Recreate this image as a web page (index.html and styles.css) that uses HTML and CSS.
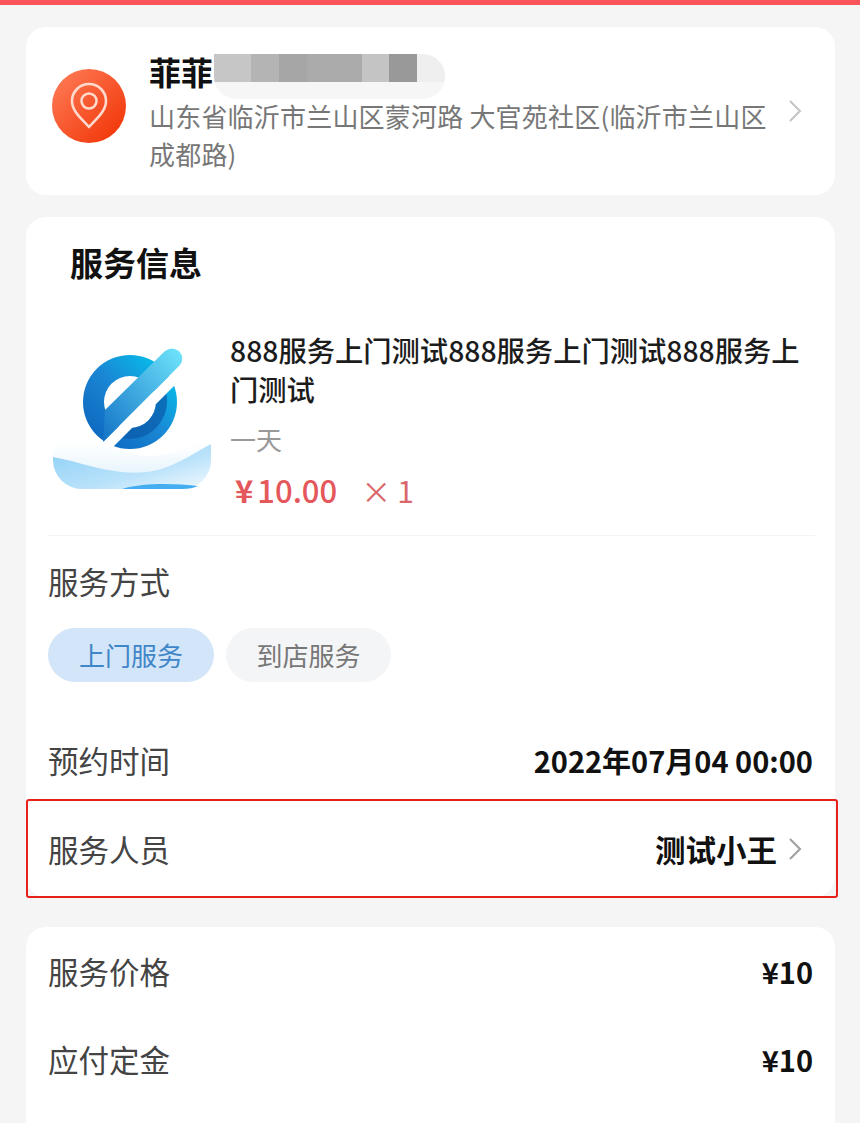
FILE: index.html
```html
<!DOCTYPE html>
<html lang="zh-CN">
<head>
    <meta charset="UTF-8">
    <title>服务信息</title>
    <link rel="stylesheet" href="styles.css">
</head>
<body>
    <div class="top-bar"></div>

    <!-- address -->
    <div class="card address-card">
        <svg class="pin" viewBox="0 0 74 76">
            <defs>
                <linearGradient id="pinBg" x1="0" y1="0" x2="1" y2="1">
                    <stop offset="0" stop-color="#ff7f5c"/>
                    <stop offset="1" stop-color="#f03000"/>
                </linearGradient>
            </defs>
            <circle cx="37" cy="38" r="37" fill="url(#pinBg)"/>
            <path d="M37 59 C31 52 20 44 20 33 A17 17 0 0 1 54 33 C54 44 43 52 37 59 Z" fill="none" stroke="#ffd9cc" stroke-width="2.6" stroke-linejoin="round"/>
            <circle cx="37" cy="33" r="7.5" fill="none" stroke="#ffd9cc" stroke-width="2.6"/>
        </svg>
        <div class="address-text">
            <div class="name">菲菲</div>
            <div class="address">山东省临沂市兰山区蒙河路 大官苑社区(临沂市兰山区成都路)</div>
            <div class="mosaic">
                <span></span><span></span><span></span><span></span><span></span><span></span>
            </div>
        </div>
        <svg class="chevron chevron-light" viewBox="0 0 14 22"><path d="M2 1 L12 11 L2 21" fill="none" stroke="#c4c4c4" stroke-width="2"/></svg>
    </div>

    <!-- service -->
    <div class="card service-card">
        <h2 class="section-title">服务信息</h2>
        <div class="product">
            <svg class="logo" viewBox="0 0 160 150">
                <defs>
                    <linearGradient id="ringFill" x1="0" y1="1" x2="1" y2="0">
                        <stop offset="0" stop-color="#0a5fb8"/>
                        <stop offset="0.5" stop-color="#1a86d4"/>
                        <stop offset="1" stop-color="#00d0f2"/>
                    </linearGradient>
                    <linearGradient id="barFill" x1="0" y1="1" x2="1" y2="0">
                        <stop offset="0" stop-color="#1272c6"/>
                        <stop offset="1" stop-color="#70e6fc"/>
                    </linearGradient>
                    <linearGradient id="waveBack" x1="0" y1="0" x2="0" y2="1">
                        <stop offset="0" stop-color="#ffffff" stop-opacity="0"/>
                        <stop offset="0.4" stop-color="#f4fafe"/>
                        <stop offset="1" stop-color="#dcf0fc"/>
                    </linearGradient>
                    <linearGradient id="waveFront" x1="0" y1="0" x2="1" y2="1">
                        <stop offset="0" stop-color="#8ccff7"/>
                        <stop offset="0.6" stop-color="#b9e2fa"/>
                        <stop offset="1" stop-color="#f2f9fe"/>
                    </linearGradient>
                </defs>
                <path d="M31 60 A47 47 0 1 1 125 60 A47 47 0 1 1 31 60 Z M52 60 A26 26 0 1 0 104 60 A26 26 0 1 0 52 60 Z" fill="url(#ringFill)" fill-rule="evenodd"/>
                <path d="M78 86 A26 26 0 0 0 104 60 L104 50 L114 50 A38 38 0 0 1 78 97 L66 96 L72 86 Z" fill="#0a5aa8" opacity="0.7"/>
                <path d="M40 111 L130 21 L145 21 L55 111 Z" fill="#fff"/>
                <path d="M53 68 L113 9 Q120 4 127 9 Q133 16 128 23 L51 100 Z" fill="url(#barFill)"/>
                <path d="M1 94 C30 98 60 104 80 112 C110 118 135 108 159 94 V118 A29 29 0 0 1 130 147 H30 A29 29 0 0 1 1 118 Z" fill="url(#waveBack)"/>
                <path d="M1 115 C30 120 60 134 95 130 C120 127 140 112 159 102 V118 A29 29 0 0 1 130 147 H30 A29 29 0 0 1 1 118 Z" fill="url(#waveFront)"/>
                <path d="M70 147 C95 140 125 142 146 144 Q140 147 130 147 Z" fill="#44aef0"/>
            </svg>
            <div class="product-info">
                <div class="product-name">888服务上门测试888服务上门测试888服务上门测试</div>
                <div class="product-spec">一天</div>
                <div class="product-price"><span class="price"><span class="yen">¥</span>10.00</span><span class="qty">×</span><span class="count">1</span></div>
            </div>
        </div>
        <div class="divider"></div>
        <div class="method">
            <div class="row-label">服务方式</div>
            <div class="pills">
                <span class="pill pill-on">上门服务</span>
                <span class="pill">到店服务</span>
            </div>
        </div>
        <div class="row time-row">
            <span class="row-label">预约时间</span>
            <span class="row-value">2022年07月04 00:00</span>
        </div>
        <div class="row staff-row">
            <span class="row-label">服务人员</span>
            <span class="row-value">测试小王</span>
            <svg class="chevron" viewBox="0 0 14 22"><path d="M2 1 L12 11 L2 21" fill="none" stroke="#a3a3a3" stroke-width="2.2"/></svg>
        </div>
    </div>

    <!-- price -->
    <div class="card price-card">
        <div class="row price-row">
            <span class="row-label">服务价格</span>
            <span class="row-value">¥10</span>
        </div>
        <div class="row price-row">
            <span class="row-label">应付定金</span>
            <span class="row-value">¥10</span>
        </div>
    </div>
</body>
</html>
```

FILE: styles.css
```css
html, body {
    height: 1123px;
    overflow: hidden;
}

body {
    margin: 0;
    background-color: #f5f5f5;
    color: #1a1a1a;
    font-family: "Noto Sans CJK SC", "Noto Sans", sans-serif;
}

.top-bar {
    height: 5px;
    background-color: #f9545a;
}

.card {
    margin: 0 25px 0 26px;
    background-color: #fff;
    border-radius: 20px;
}

/* address */
.address-card {
    position: relative;
    display: flex;
    align-items: center;
    margin-top: 22px;
    height: 168px;
    padding: 0 32px 0 26px;
    box-sizing: border-box;
}

.pin {
    flex: none;
    width: 74px;
    height: 76px;
    margin-top: -11px;
}

.address-text {
    position: relative;
    width: 622px;
    margin-left: 23px;
    margin-top: 1px;
}

.name {
    font-size: 32px;
    line-height: 40px;
    font-weight: bold;
    color: #111;
}

.address {
    margin-top: 6px;
    font-size: 26px;
    line-height: 38px;
    letter-spacing: 0.2px;
    color: #777;
}

.mosaic {
    position: absolute;
    left: 65px;
    top: 3px;
    display: flex;
    width: 231px;
    height: 45px;
    border-radius: 0 22px 22px 22px;
    background: linear-gradient(#efefef 62%, #f6f6f6 62%);
    overflow: hidden;
}

.mosaic span {
    height: 28px;
}

.mosaic span:nth-child(1) { width: 37px; background-color: #c6c6c6; }
.mosaic span:nth-child(2) { width: 28px; background-color: #b4b4b4; }
.mosaic span:nth-child(3) { width: 28px; background-color: #a6a6a6; }
.mosaic span:nth-child(4) { width: 55px; background-color: #ababab; }
.mosaic span:nth-child(5) { width: 27px; background-color: #c4c4c4; }
.mosaic span:nth-child(6) { width: 28px; background-color: #999; }

.chevron {
    flex: none;
    width: 14px;
    height: 22px;
}

.chevron-light {
    margin-left: 17px;
}

/* service */
.service-card {
    margin-top: 22px;
    height: 680px;
}

.section-title {
    margin: 0;
    padding: 22px 0 0 44px;
    font-size: 33px;
    line-height: 46px;
    font-weight: bold;
    color: #111;
}

.product {
    display: flex;
    margin-top: 44px;
    padding-left: 26px;
}

.logo {
    flex: none;
    width: 160px;
    height: 150px;
    margin-top: 13px;
}

.product-info {
    width: 578px;
    margin-left: 18px;
    margin-top: 1px;
}

.product-name {
    font-size: 28.3px;
    line-height: 39px;
    font-weight: 500;
    color: #1c1c1c;
}

.product-spec {
    margin-top: 13px;
    font-size: 26px;
    line-height: 36px;
    color: #999;
}

.product-price {
    margin-top: 12px;
    line-height: 42px;
    color: #e4575a;
}

.price {
    margin-left: 5px;
    font-size: 31px;
    font-weight: 500;
}

.yen {
    margin-right: 4px;
    font-weight: bold;
}

.qty {
    margin-left: 24px;
    font-size: 30px;
    color: #d9686a;
}

.count {
    margin-left: 6px;
    font-size: 30px;
    color: #d9686a;
}

.divider {
    height: 1px;
    margin: 18px 20px 0 22px;
    background-color: #f3f3f3;
}

.method {
    padding: 22px 22px 0;
}

.row-label {
    font-size: 30.5px;
    line-height: 46px;
    color: #444;
}

.pills {
    display: flex;
    gap: 12px;
    margin-top: 24px;
}

.pill {
    width: 165px;
    height: 54px;
    border-radius: 27px;
    background-color: #f4f5f6;
    color: #777;
    font-size: 26px;
    line-height: 54px;
    text-align: center;
}

.pill-on {
    width: 166px;
    background-color: #d3e5f8;
    color: #3f86c8;
}

.row {
    display: flex;
    align-items: center;
    justify-content: space-between;
    padding: 0 22px;
}

.row-value {
    font-size: 29px;
    line-height: 46px;
    font-weight: bold;
    color: #111;
}

.time-row {
    margin-top: 55px;
    height: 46px;
}

.staff-row {
    box-sizing: border-box;
    height: 99px;
    margin: 16px -3px 0 0;
    padding-right: 34px;
    border: 2px solid #e8201a;
    border-radius: 3px;
    justify-content: flex-start;
    padding-left: 20px;
}

.staff-row .row-value {
    margin-left: auto;
    font-size: 30.5px;
}

.staff-row .chevron {
    margin-left: 11px;
}

/* price */
.price-card {
    margin-top: 30px;
    height: 220px;
    padding-top: 21px;
}

.price-row {
    height: 46px;
    margin-bottom: 42px;
}
```
